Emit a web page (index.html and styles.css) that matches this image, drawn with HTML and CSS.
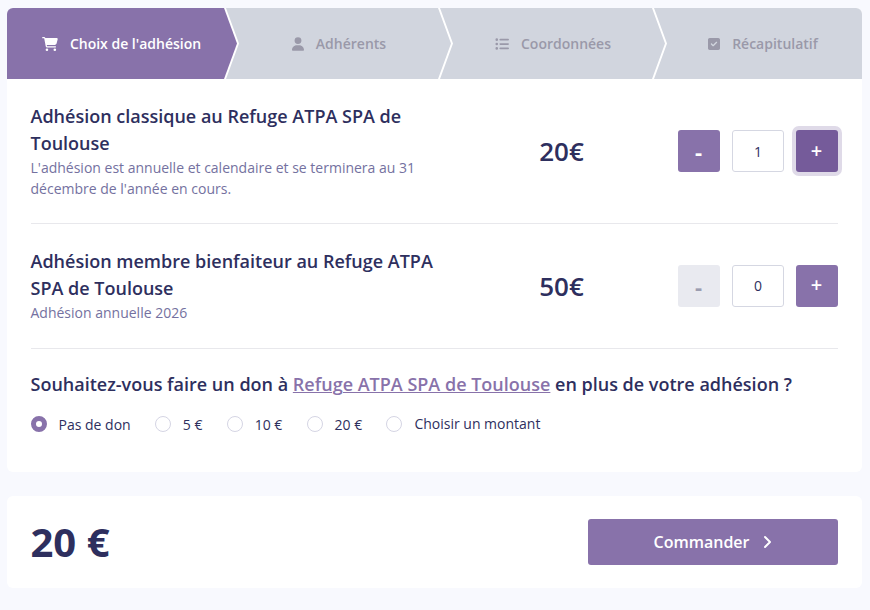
FILE: index.html
```html
<!DOCTYPE html>
<html lang="fr">
<head>
  <meta charset="UTF-8">
  <meta name="viewport" content="width=device-width, initial-scale=1.0">
  <title>Adhésion</title>
  <link rel="stylesheet" href="styles.css">
</head>
<body>
  <form class="page">
    <div class="card">
      <nav class="steps">
        <div class="step active">
          <svg class="icon" width="16" height="14" viewBox="0 0 576 512" fill="currentColor"><path d="M0 24C0 10.700 10.700 0 24 0h45.500c22 0 41.500 12.800 50.600 32h411c26.300 0 45.500 25 38.600 50.400l-41 152.300c-8.500 31.400-37 53.300-69.500 53.300H170.700l5.400 28.500c2.200 11.300 12.100 19.500 23.600 19.500H488c13.300 0 24 10.700 24 24s-10.700 24-24 24H199.700c-34.600 0-64.300-24.600-70.700-58.500L77.400 54.500c-.7-3.800-4-6.500-7.900-6.500H24C10.700 48 0 37.300 0 24zm128 440a48 48 0 1 1 96 0 48 48 0 1 1-96 0zm336-48a48 48 0 1 1 0 96 48 48 0 1 1 0-96z"/></svg>
          <span>Choix de l'adhésion</span>
        </div>
        <div class="step">
          <svg class="icon" width="12" height="14" viewBox="0 0 448 512" fill="currentColor"><path d="M224 256a128 128 0 1 0 0-256 128 128 0 1 0 0 256zm-45.700 48C79.800 304 0 383.800 0 482.300 0 498.700 13.300 512 29.700 512h388.600c16.400 0 29.700-13.300 29.700-29.700C448 383.800 368.200 304 269.700 304h-91.400z"/></svg>
          <span>Adhérents</span>
        </div>
        <div class="step">
          <svg class="icon" width="14" height="14" viewBox="0 0 512 512" fill="currentColor"><path d="M64 144a48 48 0 1 0 0-96 48 48 0 1 0 0 96zm128-80c-17.700 0-32 14.300-32 32s14.300 32 32 32h288c17.700 0 32-14.300 32-32s-14.300-32-32-32H192zm0 160c-17.700 0-32 14.300-32 32s14.300 32 32 32h288c17.700 0 32-14.300 32-32s-14.300-32-32-32H192zm0 160c-17.700 0-32 14.300-32 32s14.300 32 32 32h288c17.700 0 32-14.300 32-32s-14.300-32-32-32H192zM64 464a48 48 0 1 0 0-96 48 48 0 1 0 0 96zm48-208a48 48 0 1 0-96 0 48 48 0 1 0 96 0z"/></svg>
          <span>Coordonnées</span>
        </div>
        <div class="step">
          <svg class="icon" width="12" height="14" viewBox="0 0 448 512" fill="currentColor"><path d="M64 32C28.700 32 0 60.700 0 96v320c0 35.300 28.700 64 64 64h320c35.300 0 64-28.700 64-64V96c0-35.300-28.700-64-64-64H64zm273 177L209 337c-9.400 9.400-24.600 9.400-33.900 0l-64-64c-9.400-9.400-9.400-24.600 0-33.900s24.600-9.400 33.900 0l47 47L303 175c9.400-9.400 24.600-9.400 33.900 0s9.400 24.600 0 33.900z"/></svg>
          <span>Récapitulatif</span>
        </div>
      </nav>

      <div class="content">
        <div class="tier">
          <div class="tier-text">
            <h2>Adhésion classique au Refuge ATPA SPA de Toulouse</h2>
            <p>L'adhésion est annuelle et calendaire et se terminera au 31 décembre de l'année en cours.</p>
          </div>
          <div class="price">20€</div>
          <div class="counter">
            <button type="button" class="btn minus">-</button>
            <input type="text" value="1">
            <button type="button" class="btn focused">+</button>
          </div>
        </div>
        <div class="tier">
          <div class="tier-text">
            <h2>Adhésion membre bienfaiteur au Refuge ATPA SPA de Toulouse</h2>
            <p>Adhésion annuelle 2026</p>
          </div>
          <div class="price">50€</div>
          <div class="counter">
            <button type="button" class="btn minus" disabled>-</button>
            <input type="text" value="0">
            <button type="button" class="btn">+</button>
          </div>
        </div>
        <div class="donation">
          <h2>Souhaitez-vous faire un don à <a href="#">Refuge ATPA SPA de Toulouse</a> en plus de votre adhésion ?</h2>
          <div class="choices">
            <label><input type="radio" name="don" checked><span>Pas de don</span></label>
            <label><input type="radio" name="don"><span>5 €</span></label>
            <label><input type="radio" name="don"><span>10 €</span></label>
            <label><input type="radio" name="don"><span>20 €</span></label>
            <label class="free"><input type="radio" name="don"><span>Choisir un montant</span></label>
          </div>
        </div>
      </div>
    </div>

    <div class="card footer">
      <div class="total">20 €</div>
      <button type="button" class="btn order">
        <span>Commander</span>
        <svg width="9" height="14" viewBox="0 0 9 14" fill="none" stroke="currentColor" stroke-width="2" stroke-linecap="round" stroke-linejoin="round"><path d="M2 2l5 5-5 5"/></svg>
      </button>
    </div>
  </form>
</body>
</html>
```
FILE: styles.css
```css
* {
  box-sizing: border-box;
}
body {
  margin: 0;
  background: #f8f9fe;
  color: #2e2f5e;
  font-family: "Open Sans", sans-serif;
  font-size: 14px;
}
h2, p {
  margin: 0;
}
.page {
  padding: 8px 8px 0 7px;
}
.card {
  background: #fff;
  border-radius: 6px;
  overflow: hidden;
}
.steps {
  display: flex;
  height: 71px;
  background: #fff;
  overflow: hidden;
}
.step {
  flex: none;
  display: flex;
  align-items: center;
  justify-content: center;
  gap: 12px;
  width: 225px;
  margin-right: -11px;
  padding-left: 1px;
  background: #d1d5de;
  color: #9a99a9;
  font-weight: 600;
  clip-path: polygon(0 0, calc(100% - 13px) 0, 100% 50%, calc(100% - 13px) 100%, 0 100%, 13px 50%);
}
.step.active {
  width: 230px;
  padding: 0 1px 0 0;
  background: #8872aa;
  color: #fff;
  clip-path: polygon(0 0, calc(100% - 13px) 0, 100% 50%, calc(100% - 13px) 100%, 0 100%);
}
.step:last-child {
  width: 218px;
  margin-right: 0;
  padding-left: 0;
  clip-path: polygon(0 0, 100% 0, 100% 100%, 0 100%, 13px 50%);
}
.content {
  padding: 0 24px 0 23.5px;
}
.tier {
  display: flex;
  align-items: center;
  padding: 24px 0;
  border-bottom: 1px solid #e8e8ec;
}
.tier + .tier {
  padding-bottom: 25px;
}
.tier-text {
  width: 428px;
  padding-right: 16px;
}
h2 {
  font-size: 18px;
  line-height: 27px;
  font-weight: 600;
}
.tier p {
  color: #7471a0;
  line-height: 21px;
}
.price {
  width: 206px;
  text-align: center;
  font-size: 26px;
  font-weight: 600;
}
.counter {
  display: flex;
  gap: 12px;
  margin-left: auto;
}
.btn {
  width: 42px;
  height: 42px;
  padding: 0 1px 2px 0;
  border: none;
  border-radius: 3px;
  background: #8872aa;
  color: #fff;
  font: 600 20px "Open Sans", sans-serif;
}
.btn.minus {
  padding-bottom: 0;
  font-size: 22px;
  font-weight: 700;
}
.btn:disabled {
  background: #e9eaf0;
  color: #9c9db0;
}
.btn.focused {
  background: #755b9a;
  box-shadow: 0 0 0 4px #dfdae8;
}
.counter input {
  width: 52px;
  height: 42px;
  border: 1px solid #d5d7e2;
  border-radius: 3px;
  text-align: center;
  color: #2e2f5e;
  font: 14px "Open Sans", sans-serif;
}
.donation {
  padding: 22px 0 38px;
}
.donation a {
  color: #8872aa;
  text-decoration-thickness: 1px;
}
.choices {
  display: flex;
  gap: 24.2px;
  margin-top: 16px;
}
.choices label {
  display: flex;
  align-items: center;
  gap: 12px;
  height: 20px;
}
.choices span {
  padding-top: 1px;
}
.choices .free span {
  padding: 0 0 1px;
}
.choices input {
  appearance: none;
  width: 16px;
  height: 16px;
  margin: 0;
  border: 1px solid #d5d5e4;
  border-radius: 50%;
}
.choices input:checked {
  border: 5px solid #8872aa;
}
.footer {
  display: flex;
  align-items: center;
  justify-content: space-between;
  height: 92px;
  margin-top: 24px;
  padding: 0 24px 0 23.5px;
}
.total {
  padding-bottom: 2px;
  font-size: 40px;
  font-weight: 700;
}
.btn.order {
  display: flex;
  align-items: center;
  justify-content: center;
  gap: 14px;
  width: 250px;
  height: 46px;
  padding: 0;
  font-size: 16px;
}
```
